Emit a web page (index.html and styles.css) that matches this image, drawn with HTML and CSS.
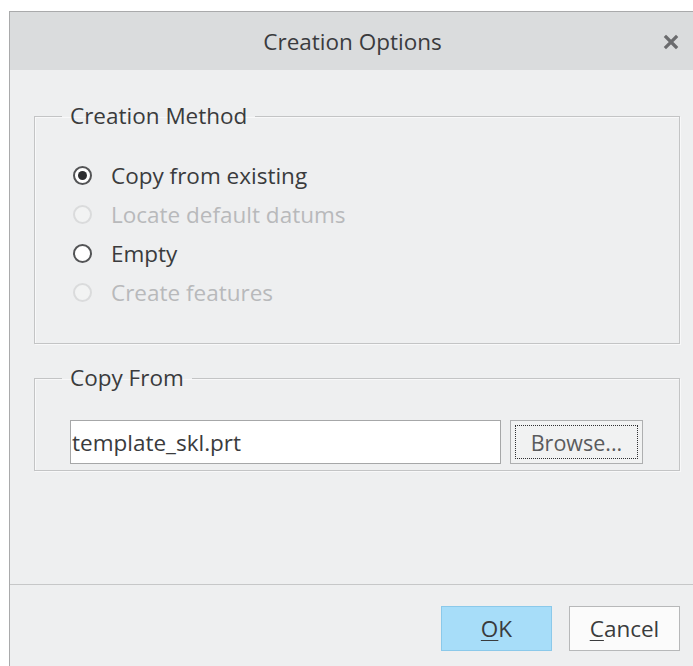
FILE: index.html
```html
<!DOCTYPE html>
<html lang="en">
<head>
<meta charset="utf-8">
<title>Creation Options</title>
<link rel="stylesheet" href="styles.css">
</head>
<body>
<div class="dialog">
  <div class="titlebar">
    <span class="title">Creation Options</span>
    <button class="close" type="button" aria-label="Close">
      <svg width="16" height="16" viewBox="0 0 16 16"><path d="M3 3 L13 13 M13 3 L3 13" stroke="#6b6c6e" stroke-width="3.2" stroke-linecap="square"/></svg>
    </button>
  </div>
  <div class="content">
    <fieldset class="group method">
      <legend>Creation Method</legend>
      <label class="radio"><span class="dot checked"></span><span>Copy from existing</span></label>
      <label class="radio disabled"><span class="dot"></span><span>Locate default datums</span></label>
      <label class="radio"><span class="dot"></span><span>Empty</span></label>
      <label class="radio disabled"><span class="dot"></span><span>Create features</span></label>
    </fieldset>
    <fieldset class="group copy">
      <legend>Copy From</legend>
      <div class="row">
        <div class="field">template_skl.prt</div>
        <button class="btn browse" type="button"><span class="focus">Browse...</span></button>
      </div>
    </fieldset>
  </div>
  <div class="footer">
    <button class="btn ok" type="button"><u>O</u>K</button>
    <button class="btn cancel" type="button"><u>C</u>ancel</button>
  </div>
</div>
</body>
</html>
```
FILE: styles.css
```css
html, body {
  margin: 0;
  padding: 0;
  background: #ffffff;
}

body {
  padding: 11px 0 0 9px;
  font-family: "Open Sans", "Noto Sans", sans-serif;
  font-size: 22.5px;
  color: #3a3b3d;
  overflow: hidden;
}

.dialog {
  width: 683px;
  height: 654px;
  border-left: 1px solid #a9aaab;
  border-top: 1px solid #a9aaab;
  background: #eeeff0;
  display: flex;
  flex-direction: column;
}

/* title bar */
.titlebar {
  position: relative;
  height: 58px;
  background: #dadcdd;
  display: flex;
  align-items: center;
  justify-content: center;
  flex: none;
}

.title {
  font-size: 22.5px;
  color: #3a3b3d;
  padding-left: 2px;
}

.close {
  position: absolute;
  right: 12px;
  top: 20px;
  width: 20px;
  height: 20px;
  padding: 0;
  border: 0;
  background: transparent;
  display: flex;
  align-items: center;
  justify-content: center;
}

/* group boxes */
.content {
  flex: 1;
  padding: 33px 13px 0 24px;
  display: flex;
  flex-direction: column;
  gap: 21px;
}

.group {
  margin: 0;
  border: 1px solid #c3c4c5;
  box-shadow: inset 1px 1px 0 #f8f8f9, 1px 1px 0 #f8f8f9;
  padding: 0 35px;
}

.group legend {
  padding: 0 8px;
  margin-left: -8px;
  font-size: 22.5px;
  color: #3a3b3d;
  line-height: 26px;
}

.method {
  padding-top: 26.5px;
  padding-bottom: 31.5px;
  display: flex;
  flex-direction: column;
}

.radio {
  display: flex;
  align-items: center;
  gap: 19px;
  height: 39px;
  margin-left: 3px;
}

.radio.disabled {
  color: #b8b9bb;
}

.dot {
  width: 15px;
  height: 15px;
  border-radius: 50%;
  border: 2px solid #535456;
  background: #ffffff;
  position: relative;
  flex: none;
}

.radio.disabled .dot {
  border-color: #dadbdc;
  background: #f2f3f3;
}

.dot.checked::after {
  content: "";
  position: absolute;
  left: 3px;
  top: 3px;
  width: 9px;
  height: 9px;
  border-radius: 50%;
  background: #2d2e30;
}

.copy {
  padding-top: 29px;
  padding-bottom: 6px;
}

.row {
  display: flex;
  gap: 9px;
}

.field {
  width: 431px;
  height: 44px;
  box-sizing: border-box;
  border: 1px solid #a6a7a8;
  background: #ffffff;
  padding: 0 1px;
  display: flex;
  align-items: center;
  color: #3a3b3d;
}

/* push buttons */
.btn {
  font-family: inherit;
  font-size: 22.5px;
  color: #3a3b3d;
  background: #f5f6f6;
  border: 1px solid #b3b4b5;
  padding: 0;
  box-sizing: border-box;
}

.browse {
  width: 133px;
  height: 44px;
  padding: 4px;
  display: flex;
  font-size: 21.5px;
  background: #f1f2f2;
  border-color: #aeafb0;
}

.browse .focus {
  flex: 1;
  border: 1.5px dotted #2f3032;
  display: flex;
  align-items: center;
  justify-content: center;
  color: #5a5b5d;
}

.footer {
  flex: none;
  height: 82px;
  border-top: 1px solid #c6c7c8;
  display: flex;
  align-items: flex-start;
  justify-content: flex-end;
  gap: 17px;
  padding: 21px 13px 0 0;
  box-sizing: border-box;
}

.ok, .cancel {
  width: 111px;
  height: 45px;
}

.ok {
  background: #a7ddf9;
  border-color: #8bc9ea;
}

.cancel {
  background: #fbfbfb;
  border-color: #b7b8b9;
}

.btn u {
  text-decoration-thickness: 1px;
  text-underline-offset: 3px;
}
```
